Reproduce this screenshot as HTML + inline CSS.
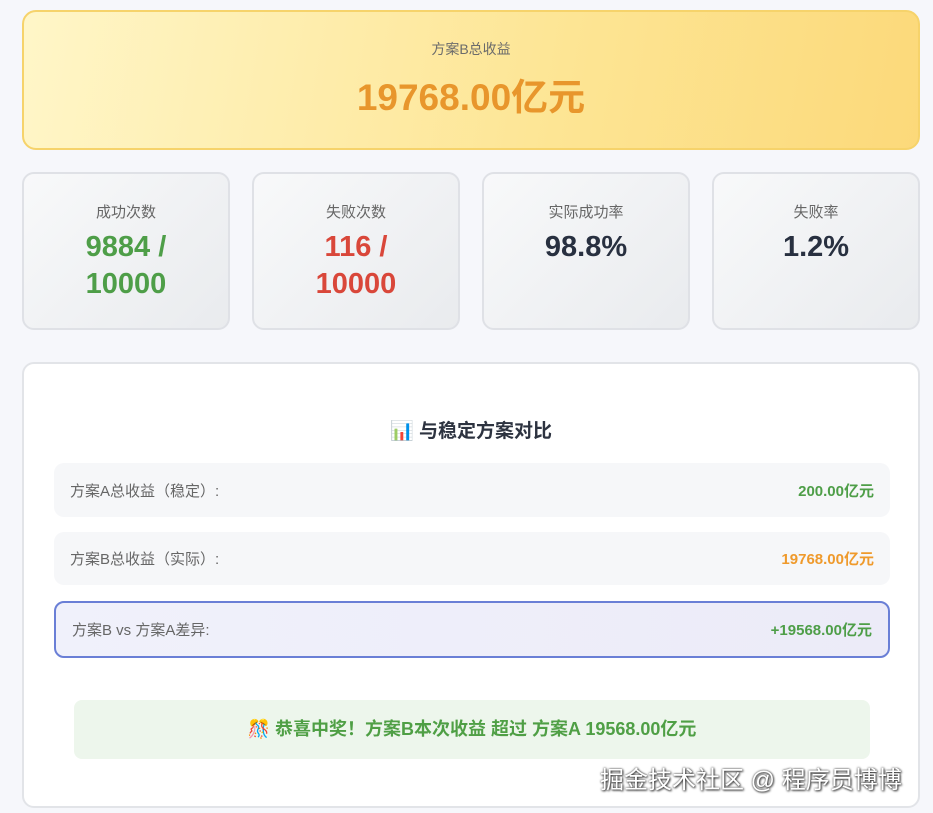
<!DOCTYPE html>
<html><head><meta charset="utf-8"><style>
*{box-sizing:border-box;margin:0;padding:0}
body{width:933px;height:813px;background:#f6f7fb;font-family:"Liberation Sans","Noto Sans CJK SC",sans-serif;position:relative;overflow:hidden}
.banner{position:absolute;left:22px;top:10px;width:898px;height:140px;border:2px solid #f6d36b;border-radius:14px;background:linear-gradient(100deg,#fff6c8,#fde594 60%,#fcd97a);text-align:center}
.banner .l{margin-top:27px;font-size:14px;color:#6b6b6b}
.banner .v{margin-top:8px;font-size:37px;font-weight:bold;color:#e8962c}
.card{position:absolute;top:172px;width:208px;height:158px;border:2px solid #dfe1e6;border-radius:12px;background:linear-gradient(135deg,#f8f9fa,#e9ebee);text-align:center}
.card .l{margin-top:27px;font-size:15px;color:#666}
.card .v{margin-top:7px;font-size:29px;font-weight:bold;line-height:37px}
.main{position:absolute;left:22px;top:362px;width:898px;height:446px;border:2px solid #e2e4e8;border-radius:12px;background:#fff}
.title{position:absolute;top:52px;width:100%;text-align:center;font-size:19px;font-weight:bold;color:#2d3340}
.row{position:absolute;left:30px;width:836px;border-radius:10px;background:#f6f7f9;display:flex;justify-content:space-between;align-items:center;padding:0 16px;font-size:15px;color:#666}
.row b{font-size:15px}
.cong{position:absolute;left:50px;top:336px;width:796px;height:59px;border-radius:8px;background:#edf6ec;text-align:center;line-height:59px;font-size:18px;font-weight:bold;color:#4f9f45}
.wm{position:absolute;left:600px;top:760px;font-size:24px;color:#fff;text-shadow:0 0 2px #333,1px 1px 2px #333}
</style></head><body>
<div class="banner"><div class="l">方案B总收益</div><div class="v">19768.00亿元</div></div>
<div class="card" style="left:22px"><div class="l">成功次数</div><div class="v" style="color:#4e9e48">9884 /<br>10000</div></div>
<div class="card" style="left:252px"><div class="l">失败次数</div><div class="v" style="color:#d9473a">116 /<br>10000</div></div>
<div class="card" style="left:482px"><div class="l">实际成功率</div><div class="v" style="color:#283040">98.8%</div></div>
<div class="card" style="left:712px"><div class="l">失败率</div><div class="v" style="color:#283040">1.2%</div></div>
<div class="main">
<div class="title">📊 与稳定方案对比</div>
<div class="row" style="top:99px;height:54px"><span>方案A总收益（稳定）:</span><b style="color:#4e9e48">200.00亿元</b></div>
<div class="row" style="top:168px;height:53px"><span>方案B总收益（实际）:</span><b style="color:#ef9a2c">19768.00亿元</b></div>
<div class="row" style="top:237px;height:57px;border:2px solid #6a7fd6;background:linear-gradient(90deg,#f0f1fb,#ecebf8)"><span>方案B vs 方案A差异:</span><b style="color:#4e9e48">+19568.00亿元</b></div>
<div class="cong">🎊 恭喜中奖！方案B本次收益 超过 方案A 19568.00亿元</div>
</div>
<div class="wm">掘金技术社区 @ 程序员博博</div>
</body></html>
